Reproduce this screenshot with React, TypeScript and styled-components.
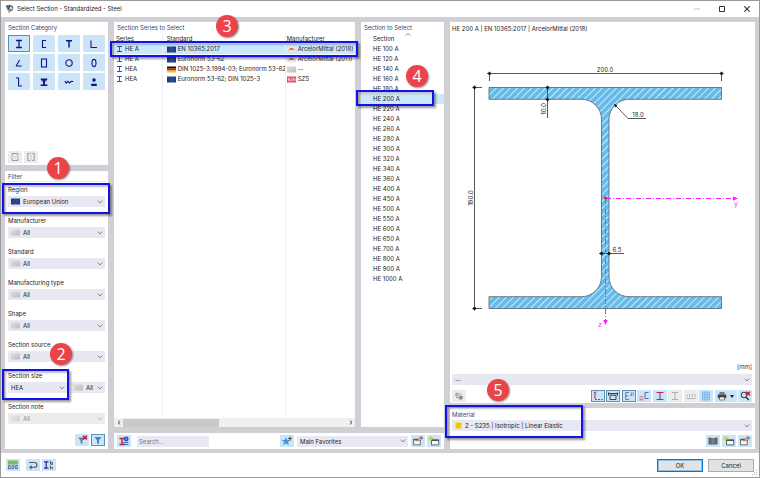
import React from "react";
import styled, { createGlobalStyle, css } from "styled-components";

const NAVY = "#14148c";
const FONT = 'Inter, "Noto Sans", sans-serif';

const GlobalStyle = createGlobalStyle`
  * { box-sizing: border-box; }
  body { margin: 0; background: #fff; }
  body, button, select, input, table { font: 6px/10px ${FONT}; color: #1c1c1c; }
  svg { display: block; flex: none; }
`;

const Window = styled.main`
  min-height: 100vh;
  display: flex;
  flex-direction: column;
  border: 1px solid #9a9a9a;
  background: #fff;
  position: relative;
`;

const TitleBar = styled.header`
  height: 16px;
  display: flex;
  align-items: center;
  padding: 0 5px 0 4px;
  gap: 3px;
`;

const Title = styled.h1`
  margin: 0;
  flex: 1;
  font: 6px/10px ${FONT};
`;

const WindowButton = styled.button`
  width: 15px;
  height: 14px;
  margin-left: 7px;
  padding: 0;
  border: 0;
  background: none;
  display: grid;
  place-items: center;
`;

const Body = styled.div`
  flex: 1;
  display: grid;
  grid-template-columns: 103px minmax(0, 330fr) minmax(0, 305fr);
  gap: 6px;
  padding: 5px 4px 4px;
  background: #cfcfd5;
`;

const Column = styled.div<{ $gap?: number }>`
  display: flex;
  flex-direction: column;
  gap: ${(p) => p.$gap ?? 6}px;
  min-width: 0;
`;

const Lists = styled.div`
  flex: 1;
  display: grid;
  grid-template-columns: minmax(0, 1fr) 83px;
  gap: 6px;
`;

const Panel = styled.section<{ $grow?: boolean; $pad?: string }>`
  position: relative;
  display: flex;
  flex-direction: column;
  background: #fff;
  padding: ${(p) => p.$pad ?? "0"};
  ${(p) => p.$grow && "flex: 1;"}
`;

const Heading = styled.h2<{ $ruled?: boolean; $inset?: boolean }>`
  margin: 0;
  height: 11px;
  font: 6px/11px ${FONT};
  color: #2f4676;
  ${(p) => p.$inset && "padding-left: 3px;"}
  ${(p) => p.$ruled && "border-bottom: 1px solid #ececf0;"}
`;

const Tiles = styled.div`
  display: grid;
  grid-template-columns: repeat(4, 1fr);
  gap: 2px 3px;
  margin-top: 2px;
`;

const Tile = styled.button<{ $on?: boolean }>`
  height: 17px;
  padding: 0;
  display: grid;
  place-items: center;
  border: 1px solid ${(p) => (p.$on ? "#4f93bd" : "#cce4f7")};
  background: #cce4f7;
`;

const IconButton = styled.button<{ $on?: boolean; $off?: boolean; $wide?: boolean }>`
  width: ${(p) => (p.$wide ? "22px" : "14px")};
  height: 12px;
  flex: none;
  padding: 0;
  display: flex;
  align-items: center;
  justify-content: center;
  gap: 3px;
  background: #cce4f7;
  border: 1px solid #cce4f7;
  ${(p) => p.$on && css`border-color: #5b91b5;`}
  ${(p) => p.$off && css`background: #ececec; border-color: #ececec;`}
`;

const Row = styled.div<{ $end?: boolean }>`
  display: flex;
  align-items: center;
  gap: 2px;
  ${(p) => p.$end && "justify-content: flex-end; margin-top: auto;"}
`;

const CategoryFooter = styled.div`
  display: flex;
  gap: 2px;
  padding-top: 61px;
`;

const FieldStack = styled.div`
  padding-top: 2px;
`;

const Field = styled.label`
  display: block;
  margin-bottom: 8px;
`;

const Caption = styled.span`
  display: block;
  height: 12px;
  line-height: 12px;
`;

const Combo = styled.span<{ $off?: boolean; $grow?: boolean }>`
  display: flex;
  align-items: center;
  gap: 3px;
  height: 11px;
  min-width: 0;
  padding: 0 2px 0 3px;
  background: #e8e8f3;
  ${(p) => p.$grow && "flex: 1;"}
  select {
    appearance: none;
    flex: 1;
    min-width: 0;
    height: 11px;
    padding: 0;
    border: 0;
    background: none;
    line-height: 11px;
    opacity: 1;
  }
  ${(p) => p.$off && css`
    background: #ececec;
    select { color: #8b8b8b; }
    svg { opacity: 0.5; }
  `}
`;

const SizeRow = styled.div`
  display: grid;
  grid-template-columns: 59px minmax(0, 1fr);
  gap: 4px;
  align-items: end;
  margin-bottom: 8px;
  ${Field} { margin-bottom: 0; }
`;

const TableBox = styled.div`
  flex: 1;
  display: flex;
`;

const Table = styled.table`
  width: 100%;
  flex: 1;
  height: 100%;
  border-collapse: collapse;
  table-layout: fixed;
  th, td { padding: 0 0 0 2px; font-weight: 400; text-align: left; white-space: nowrap; overflow: hidden; line-height: 10px; }
  th + th, td + td { border-left: 1px solid #eeeef2; padding-left: 4px; }
  th:last-child:not(:first-child), td:last-child:not(:first-child) { padding-left: 1px; }
`;

const Col = styled.col<{ $width?: string }>`
  width: ${(p) => p.$width ?? "auto"};
`;

const SectionTable = styled(Table)`
  && th, && td { padding-left: 12px; position: relative; }
`;

const DataRow = styled.tr<{ $on?: boolean }>`
  height: 10px;
  background: ${(p) => (p.$on ? "#cce8ff" : "none")};
`;

const HeadRow = styled.tr`
  height: 11px;
`;

const Cell = styled.span`
  display: flex;
  align-items: center;
  gap: 2px;
  height: 10px;
`;

const SortMark = styled.svg`
  position: absolute;
  top: 0;
  left: 44px;
`;

const ScrollBar = styled.div`
  display: flex;
  align-items: center;
  height: 9px;
  background: #f0f0f0;
`;

const ScrollArrow = styled.button`
  width: 9px;
  height: 9px;
  padding: 0;
  border: 0;
  background: none;
  display: grid;
  place-items: center;
`;

const ScrollTrack = styled.div`
  flex: 1;
  height: 8px;
`;

const ScrollThumb = styled.div`
  width: 43%;
  height: 8px;
  background: #c9c9c9;
`;

const SearchBox = styled.input`
  width: 72px;
  height: 11px;
  margin-left: 4px;
  padding: 0 2px;
  border: 0;
  border-radius: 0;
  background: #e8e8f3;
  &::placeholder { color: #777; opacity: 1; }
`;

const FavoritesBox = styled.div`
  display: flex;
  width: 111px;
  margin: 0 1px;
`;

const Spacer = styled.span`
  flex: 1;
`;

const DrawingBox = styled.div`
  flex: 1;
  display: flex;
  margin: 0 -3px 0 -2px;
`;

const Drawing = styled.svg`
  flex: 1;
  width: 100%;
  min-height: 0;
  text { font: 6px ${FONT}; fill: #222; text-anchor: middle; }
  .axis { fill: #ff1cff; font-size: 7px; }
`;

const SectionTitle = styled.p`
  margin: 0;
  height: 11px;
  line-height: 11px;
`;

const Units = styled.span`
  display: block;
  text-align: right;
  height: 12px;
  color: #33304a;
`;

const ToolRow = styled.div`
  display: flex;
  padding-top: 5px;
`;

const ViewTools = styled.div`
  margin-left: auto;
  width: 161px;
  display: flex;
  justify-content: space-between;
`;

const MaterialTools = styled.div`
  display: flex;
  justify-content: flex-end;
  gap: 2px;
  padding-top: 4px;
`;

const Footer = styled.footer`
  height: 24px;
  display: flex;
  align-items: center;
  gap: 2px;
  padding: 0 5px;
`;

const FooterGap = styled.span`
  width: 2px;
`;

const DialogButton = styled.button<{ $main?: boolean }>`
  width: 46px;
  height: 13px;
  margin-left: 3px;
  padding: 0;
  line-height: 9px;
  background: #e3e3e3;
  border: 1px solid ${(p) => (p.$main ? "#0078d7" : "#adadad")};
  ${(p) => p.$main && "box-shadow: inset 0 0 0 1px #8cc1ec;"}
`;

const Grip = styled.svg`
  position: absolute;
  right: 1px;
  bottom: 1px;
`;

const Outline = styled.span<{ $x: number; $y: number; $w: string; $h: number }>`
  position: absolute;
  z-index: 2;
  left: ${(p) => p.$x}px;
  top: ${(p) => p.$y}px;
  width: ${(p) => p.$w};
  height: ${(p) => p.$h}px;
  border: 2px solid #1212ee;
  box-shadow: 2px 2px 2px rgba(0, 0, 0, 0.4), inset 2px 2px 2px rgba(0, 0, 0, 0.25);
  pointer-events: none;
`;

const Badge = styled.span<{ $x: number; $y: number }>`
  position: absolute;
  z-index: 3;
  left: ${(p) => p.$x}px;
  top: ${(p) => p.$y}px;
  width: 22px;
  height: 22px;
  border-radius: 50%;
  background: #ea4449;
  color: #fff;
  font: 16px/22px "Open Sans", sans-serif;
  text-align: center;
  box-shadow: 1px 1px 2px rgba(0, 0, 0, 0.45);
  pointer-events: none;
`;

const Chevron = () => (
  <svg width="6" height="4" viewBox="0 0 6 4">
    <path d="M.7.6 3 2.9 5.3.6" fill="none" stroke="#666" strokeWidth=".8" />
  </svg>
);

const Swatch = () => (
  <svg width="9" height="7" viewBox="0 0 9 7">
    <defs>
      <linearGradient id="sw" x2="1" y2="1">
        <stop offset="0" stopColor="#dededb" />
        <stop offset="1" stopColor="#bdbdbd" />
      </linearGradient>
    </defs>
    <rect y=".5" width="9" height="6" fill="url(#sw)" />
  </svg>
);

const EuFlag = () => (
  <svg width="9" height="7" viewBox="0 0 9 7">
    <rect y=".5" width="9" height="6" fill="#1d3a94" />
    <circle cx="4.5" cy="3.5" r="1.8" fill="none" stroke="#8d9158" strokeWidth=".7" strokeDasharray=".6 .5" />
  </svg>
);

const DeFlag = () => (
  <svg width="9" height="7" viewBox="0 0 9 7">
    <path d="M0 .5h9v2H0z" fill="#111" />
    <path d="M0 2.5h9v2H0z" fill="#d91414" />
    <path d="M0 4.5h9v2H0z" fill="#f6c500" />
  </svg>
);

const MillLogo = () => (
  <svg width="9" height="7" viewBox="0 0 9 7">
    <path d="M0 .5h9v6H0z" fill="#e9e6e4" />
    <path d="M.4 4.8 3.6 1.9h1.8l3.2 2.9-2.8-1.4-1.3.9-1.3-.9z" fill="#d8652f" />
  </svg>
);

const SzsLogo = () => (
  <svg width="9" height="7" viewBox="0 0 9 7">
    <path d="M0 .5h9v6H0z" fill="#e2415c" />
    <path d="M3 2.2H1v1.3h2v1.3H1M3.8 2.2h1.7L3.8 4.8h1.7M8.2 2.2H6.4v1.3h1.8v1.3H6.4" fill="none" stroke="#fff" strokeWidth=".6" />
  </svg>
);

const BeamIcon = () => (
  <svg width="7" height="8" viewBox="0 0 7 8">
    <path d="M1 1.5h5M1 6.5h5M3.5 1.5v5" fill="none" stroke="#2d3c9c" strokeWidth=".9" />
  </svg>
);

const shapes: React.ReactNode[] = [
  <path d="M3 2.5h6M3 9.5h6M6 2.5v7" strokeWidth="1.3" />,
  <path d="M8 2.5H4.5v7H8" />,
  <path d="M3 2.8h6M6 2.5v7" strokeWidth="1.5" />,
  <path d="M3 2.5v7h6" />,
  <path d="M6.6 3 3.4 8.4q-.3.6.4.6H8.8" />,
  <rect x="3.5" y="2" width="5" height="8" />,
  <circle cx="6" cy="6" r="3.2" />,
  <ellipse cx="6" cy="6" rx="2" ry="3.6" />,
  <path d="M3 2h2.6v8H9" />,
  <g><path d="M2.8 3.2h6.4M2.6 9.2h6.8" strokeWidth="1.4" /><path d="M3.4 4.8h5.2" /><path d="M6 3v6" strokeWidth="2" /></g>,
  <path d="M1.8 5 3.2 7l1.7-1.6L6.6 7l1.7-1.6 2 .1" strokeWidth="1.2" />,
  <g fill={NAVY}><circle cx="6" cy="4" r="1.2" /><path d="M3.8 8.2h4.4v1.2H3.8z" /></g>,
];
const shapeNames = ["I-section", "Channel", "T-section", "Angle", "Acute angle", "Rectangular tube", "Pipe", "Oval", "Z-section", "Rail", "Corrugated", "Other"];

const Icon = ({ children, w = 12 }: { children: React.ReactNode; w?: number }) => (
  <svg width={w} height="10" viewBox={`0 0 ${w} 10`} fill="none">{children}</svg>
);

const NewIcon = () => (
  <Icon>
    <path d="M3.5 3.9h7.2v5H3.5z" fill="#f7fbff" stroke="#444" strokeWidth=".8" />
    <path d="M3.5 4.3h7.2" stroke="#444" strokeWidth="1.2" />
    <path d="M3 .4l.7 1.5L5.3 2.5 3.7 3.2 3 4.9 2.2 3.2.6 2.5 2.2 1.9z" fill="#dfdf12" stroke="#8d9a20" strokeWidth=".3" />
  </Icon>
);

const EditIcon = () => (
  <Icon>
    <path d="M1.5 3.2h6.8v5.6H1.5z" fill="#f4f4f4" stroke="#555" strokeWidth=".8" />
    <path d="M1.5 3.8h6.8" stroke="#444" strokeWidth="1.2" />
    <path d="M4.6 5.2 6 2.6 8.8.8l1.3 1.5-2 2.6-1.6-.6z" fill="#d9a584" stroke="#7d5a48" strokeWidth=".4" />
    <path d="m9 .3 2 1.6-.6 1.3-2-1.9z" fill="#3561a8" />
  </Icon>
);

const BookIcon = () => (
  <Icon>
    <path d="M1.5 1.5 5.7 2v6.8l-4.2-.6zM10.5 1.5 6.3 2v6.8l4.2-.6z" fill="#555" />
    <path d="M3 2.2v5.6M4.4 2.4v5.6M7.6 2.4v5.6M9 2.2v5.6" stroke="#a7b4bd" strokeWidth=".4" />
  </Icon>
);

const RedX = () => <path d="m7 .8 4 3.6m0-3.6L7 4.4" stroke="#d0121b" strokeWidth="1.5" />;

type ComboBoxProps = { label: string; value: string; icon?: React.ReactNode; off?: boolean; grow?: boolean };
const ComboBox = ({ label, value, icon, off, grow }: ComboBoxProps) => (
  <Combo $off={off} $grow={grow}>
    {icon}
    <select aria-label={label} disabled={off}>
      <option>{value}</option>
    </select>
    <Chevron />
  </Combo>
);

const filters = ["Manufacturer", "Standard", "Manufacturing type", "Shape", "Section source"];

const series = [
  ["HE A", <EuFlag />, "EN 10365:2017", <MillLogo />, "ArcelorMittal (2018)"],
  ["HE A", <EuFlag />, "Euronorm 53-62", <MillLogo />, "ArcelorMittal (2011)"],
  ["HEA", <DeFlag />, "DIN 1025-3:1994-03; Euronorm 53-62", <Swatch />, "--"],
  ["HEA", <EuFlag />, "Euronorm 53-62; DIN 1025-3", <SzsLogo />, "SZS"],
];

const sizes = [100, 120, 140, 160, 180, 200, 220, 240, 260, 280, 300, 320, 340, 360, 400, 450, 500, 550, 600, 650, 700, 800, 900, 1000];

const BEAM =
  "M489 86.5H721.5V98.3H629A20 20 0 0 0 609 118.3V275.7A20 20 0 0 0 629 295.7H721.5V307.5H489V295.7H581.5A20 20 0 0 0 601.5 275.7V118.3A20 20 0 0 0 581.5 98.3H489Z";

const Knot = ({ x, y }: { x: number; y: number }) => (
  <path d={`M${x - 2} ${y}l2-2 2 2-2 2z`} fill="#111" />
);

const SectionDrawing = () => (
  <Drawing viewBox="450 34 305 326" role="img" aria-label="HE 200 A cross-section">
    <defs>
      <pattern id="hatch" width="5" height="5" patternUnits="userSpaceOnUse" patternTransform="rotate(45)">
        <path d="M0 0h5v5H0z" fill="#67bbea" />
        <path d="M2.5 0v5" stroke="#cdeafa" strokeWidth="1" />
      </pattern>
    </defs>
    <path d={BEAM} fill="url(#hatch)" stroke="#5c6f7c" strokeWidth=".9" />
    <g stroke="#444" strokeWidth=".9" fill="none">
      <path d="M487 72.5H723.5M489.5 71v9M721.5 71v9" />
      <path d="M474.5 84.5V309.5M472.5 86.5H482M472.5 307.5H482" />
      <path d="M547.5 85V117M615.5 104.5 628 117.5H646M599 252.5H624" />
    </g>
    <Knot x={489.5} y={72.5} />
    <Knot x={721.5} y={72.5} />
    <Knot x={474.5} y={86.5} />
    <Knot x={474.5} y={307.5} />
    <Knot x={547.5} y={86.5} />
    <Knot x={547.5} y={98.5} />
    <Knot x={601.5} y={252.5} />
    <Knot x={609} y={252.5} />
    <path d="m614 103 3.6 1-2.6 2.4z" fill="#111" />
    <path d="M606 197.5H733" stroke="#ff1cff" strokeWidth="1" strokeDasharray="5 2 1 2" />
    <path d="M605.5 198V319" stroke="#ff1cff" strokeWidth="1" strokeDasharray="5 2 1 2" />
    <path d="M733 195.3v4.4l5-2.2zM603.2 319h4.6l-2.3 5z" fill="#ff1cff" />
    <circle cx="605.5" cy="197" r="1.5" fill="#ee1c25" />
    <text x="605" y="71">200.0</text>
    <text x="638" y="116">18.0</text>
    <text x="617" y="251">6.5</text>
    <text transform="translate(473 197) rotate(-90)">190.0</text>
    <text transform="translate(546 108) rotate(-90)">10.0</text>
    <text x="736" y="205" className="axis">y</text>
    <text x="600" y="326" className="axis">z</text>
  </Drawing>
);

const CategoryPanel = () => (
  <Panel $pad="0 3px 2px">
    <Heading>Section Category</Heading>
    <Tiles>
      {shapes.map((shape, i) => (
        <Tile key={i} $on={i === 0} aria-label={shapeNames[i]}>
          <svg width="12" height="12" fill="none" stroke={NAVY} strokeWidth="1.1">{shape}</svg>
        </Tile>
      ))}
    </Tiles>
    <CategoryFooter>
      <IconButton $off aria-label="Horizontal pair">
        <Icon><path d="M3.2 4V1.5h5.6V4M3.2 6v2.5h5.6V6" stroke="#888" strokeWidth=".8" /><path d="M1.5 5h9" stroke="#aaa" strokeWidth=".7" strokeDasharray="1.5 .8" /></Icon>
      </IconButton>
      <IconButton $off aria-label="Vertical pair">
        <Icon><path d="M4.8 1.5H2.8v7h2M7.2 1.5h2v7h-2" stroke="#888" strokeWidth=".8" /><path d="M6 .5v9" stroke="#aaa" strokeWidth=".7" strokeDasharray="1.5 .8" /></Icon>
      </IconButton>
    </CategoryFooter>
    <Badge $x={42} $y={135}>1</Badge>
  </Panel>
);

const FilterPanel = () => (
  <Panel $grow $pad="0 3px 3px">
    <Heading $ruled>Filter</Heading>
    <FieldStack>
      <Field>
        <Caption>Region</Caption>
        <ComboBox label="Region" value="European Union" icon={<EuFlag />} />
      </Field>
      {filters.map((f) => (
        <Field key={f}>
          <Caption>{f}</Caption>
          <ComboBox label={f} value="All" icon={<Swatch />} />
        </Field>
      ))}
      <SizeRow>
        <Field>
          <Caption>Section size</Caption>
          <ComboBox label="Section size" value="HEA" />
        </Field>
        <ComboBox label="Section size variant" value="All" icon={<Swatch />} />
      </SizeRow>
      <Field>
        <Caption>Section note</Caption>
        <ComboBox label="Section note" value="All" icon={<Swatch />} off />
      </Field>
    </FieldStack>
    <Row $end>
      <IconButton aria-label="Clear filter">
        <Icon><path d="M2 2.5h7L6.5 5.4V9l-2-1V5.4z" fill="#5e87b8" /><RedX /></Icon>
      </IconButton>
      <IconButton $on aria-label="Filter">
        <Icon><path d="M2.5 2h7L7 5.2V9L5 8V5.2z" fill="#4b80bd" /></Icon>
      </IconButton>
    </Row>
    <Outline $x={-3} $y={12} $w="108px" $h={31} />
    <Outline $x={-3} $y={198} $w="67px" $h={31} />
    <Badge $x={45} $y={172}>2</Badge>
  </Panel>
);

const SeriesPanel = () => (
  <Panel>
    <Heading $inset>Section Series to Select</Heading>
    <TableBox>
      <Table>
        <colgroup>
          <Col $width="20%" />
          <Col />
          <Col $width="29%" />
        </colgroup>
        <thead>
          <HeadRow><th>Series</th><th>Standard</th><th>Manufacturer</th></HeadRow>
        </thead>
        <tbody>
          {series.map((r, i) => (
            <DataRow key={i} $on={i === 0}>
              <td><Cell><BeamIcon />{r[0]}</Cell></td>
              <td><Cell>{r[1]}{r[2]}</Cell></td>
              <td><Cell>{r[3]}{r[4]}</Cell></td>
            </DataRow>
          ))}
          <tr><td /><td /><td /></tr>
        </tbody>
      </Table>
    </TableBox>
    <ScrollBar>
      <ScrollArrow aria-label="Scroll left">
        <svg width="4" height="5"><path d="M3.2.5 1 2.5l2.2 2" fill="none" stroke="#444" /></svg>
      </ScrollArrow>
      <ScrollTrack><ScrollThumb /></ScrollTrack>
      <ScrollArrow aria-label="Scroll right">
        <svg width="4" height="5"><path d="M.8.5 3 2.5l-2.2 2" fill="none" stroke="#444" /></svg>
      </ScrollArrow>
    </ScrollBar>
    <Outline $x={-4} $y={19} $w="calc(100% + 7px)" $h={16} />
    <Badge $x={102} $y={-7}>3</Badge>
  </Panel>
);

const SizesPanel = () => (
  <Panel>
    <Heading $inset>Section to Select</Heading>
    <TableBox>
      <SectionTable>
        <thead>
          <HeadRow>
            <th>
              Section
              <SortMark width="6" height="3"><path d="M.5 2.6 3 .5l2.5 2.1" fill="none" stroke="#777" strokeWidth=".8" /></SortMark>
            </th>
          </HeadRow>
        </thead>
        <tbody>
          {sizes.map((s) => (
            <DataRow key={s} $on={s === 200}><td>HE {s} A</td></DataRow>
          ))}
          <tr><td /></tr>
        </tbody>
      </SectionTable>
    </TableBox>
    <Outline $x={-5} $y={68} $w="78px" $h={16} />
    <Badge $x={45} $y={43}>4</Badge>
  </Panel>
);

const SearchPanel = () => (
  <Panel $pad="2px 3px">
    <Row>
      <IconButton aria-label="Section info">
        <Icon>
          <path d="M1.5 2.5h5M1.5 8.5h5M4 2.5v6" stroke="#d0232b" strokeWidth="1.5" />
          <path d="M5 6.5h5.5M5 8.5h5.5" stroke="#2b4b9b" strokeWidth=".8" />
          <circle cx="8.2" cy="3" r="2.4" fill="#1845d2" />
          <path d="M8.2 1.6v2.8" stroke="#fff" strokeWidth=".7" />
        </Icon>
      </IconButton>
      <SearchBox aria-label="Search" placeholder="Search..." />
      <Spacer />
      <IconButton aria-label="Add to favorites">
        <Icon>
          <path d="m5 1.3 1.2 2.6 3 .2-2.2 2 .8 3L5 7.5 2.2 9.1l.8-3-2.2-2 3-.2z" fill="#3f97e8" />
          <path d="M9 .5v4M7 2.5h4" stroke="#5b5b2c" strokeWidth="1.2" />
        </Icon>
      </IconButton>
      <FavoritesBox><ComboBox grow label="Favorites" value="Main Favorites" /></FavoritesBox>
      <IconButton aria-label="Edit favorites"><EditIcon /></IconButton>
      <IconButton aria-label="New favorites"><NewIcon /></IconButton>
    </Row>
  </Panel>
);

const PreviewPanel = () => (
  <Panel $grow $pad="1px 3px 1px 2px">
    <SectionTitle>HE 200 A | EN 10365:2017 | ArcelorMittal (2018)</SectionTitle>
    <DrawingBox><SectionDrawing /></DrawingBox>
    <Units>[mm]</Units>
    <ComboBox label="Drawing note" value="--" />
    <ToolRow>
      <IconButton $off aria-label="Colours">
        <Icon><circle cx="4" cy="3.5" r="2" fill="#aaa" /><circle cx="7.8" cy="6.6" r="2.2" fill="#909090" /><path d="M3 6.5h2.5M6.5 3h2" stroke="#999" /></Icon>
      </IconButton>
      <ViewTools>
        <IconButton $on aria-label="Stress points">
          <Icon><path d="M3 1v6.8" stroke="#cc2850" strokeWidth="1.1" /><path d="M3 8.5h7.5" stroke="#cc2850" strokeWidth="1.2" strokeDasharray="2 1" /><path d="M2 1.3h2.2" stroke="#cc2850" /></Icon>
        </IconButton>
        <IconButton $on aria-label="Dimensions">
          <Icon><path d="M1.5 1.5v3M10.5 1.5v3M1.5 2.6h9" stroke="#222" strokeWidth=".9" /><path d="M3 4.2h6v4.3H3z" stroke="#333" strokeWidth=".9" /></Icon>
        </IconButton>
        <IconButton $on aria-label="Labels">
          <Icon><path d="M6 1.5H2.7v7H6M2.7 5h2.6" stroke="#5a6fa8" strokeWidth=".9" /><path d="M7 4.5h1.4v-3M10.2 1.2v3.3" stroke="#cc3b64" strokeWidth=".8" /></Icon>
        </IconButton>
        <IconButton aria-label="Principal axes">
          <Icon><path d="M10.5 1.5H7v6h3.5" stroke="#466b9d" strokeWidth=".9" /><path d="M2.2 5.5h2.6v3H2.2zM1.6 9h3.8" stroke="#d36b8c" strokeWidth=".7" /></Icon>
        </IconButton>
        <IconButton aria-label="Beam">
          <Icon><path d="M2.5 1.5h7M2.5 8.5h7" stroke="#c92446" strokeWidth="1.2" /><path d="M6 2v6" stroke="#335566" /></Icon>
        </IconButton>
        <IconButton $off aria-label="Beam parts">
          <Icon><path d="M3 1.5h6M3 8.5h6M6 1.5v7" stroke="#b0b0b0" /></Icon>
        </IconButton>
        <IconButton $off aria-label="Dimension chain">
          <Icon><path d="M1.5 7.5h9M2 3v3M4.7 3v3M7.3 3v3M10 3v3" stroke="#b0b0b0" strokeWidth=".9" /></Icon>
        </IconButton>
        <IconButton aria-label="Grid">
          <Icon><path d="M2.5 1h7v8h-7zM4.8 1v8M7.2 1v8M2.5 3.7h7M2.5 6.3h7" stroke="#50a5e5" strokeWidth=".7" /></Icon>
        </IconButton>
        <IconButton $wide aria-label="Print">
          <Icon w={10}><path d="M2.5 1h5v2h-5z" fill="#777" /><path d="M.8 3.4h8.4v3.8H.8z" fill="#3d4248" /><path d="M2.5 6h5v3h-5z" fill="#eee" stroke="#444" strokeWidth=".6" /></Icon>
          <svg width="4" height="3"><path d="M0 0h4L2 3z" fill="#222" /></svg>
        </IconButton>
        <IconButton aria-label="Reset view">
          <Icon><circle cx="5" cy="4" r="2.7" stroke="#3c5068" strokeWidth="1.1" /><path d="m6.8 6 3 3" stroke="#2d3540" strokeWidth="1.5" /><RedX /></Icon>
        </IconButton>
      </ViewTools>
    </ToolRow>
  </Panel>
);

const MaterialPanel = () => (
  <Panel $pad="1px 3px 2px 2px">
    <Heading>Material</Heading>
    <ComboBox
      label="Material"
      value="2 - S235 | Isotropic | Linear Elastic"
      icon={<svg width="7" height="7"><path d="M.5.5h6v6h-6z" fill="#f6c30e" /></svg>}
    />
    <MaterialTools>
      <IconButton aria-label="Material library"><BookIcon /></IconButton>
      <IconButton aria-label="New material"><NewIcon /></IconButton>
      <IconButton aria-label="Edit material"><EditIcon /></IconButton>
    </MaterialTools>
    <Outline $x={-5} $y={-3} $w="138px" $h={33} />
    <Badge $x={37} $y={-29}>5</Badge>
  </Panel>
);

export default function App() {
  return (
    <Window>
      <GlobalStyle />
      <TitleBar>
        <svg width="9" height="10" viewBox="0 0 9 10">
          <path d="M.5 2 5 .6l3.4 1.6-.8 4L4 8.8z" fill="#718ba5" />
          <path d="M1 2.4 3 1.8l.6 4.6M4.4 1.6l.8 4.8" stroke="#263d5c" strokeWidth=".8" fill="none" />
          <circle cx="6" cy="4.2" r="1.7" fill="#e9eef3" stroke="#36506f" strokeWidth=".7" />
          <path d="m2.6 6.2 1.6-1 .8 2.6-1 1.4z" fill="#e2a936" />
        </svg>
        <Title>Select Section - Standardized - Steel</Title>
        <WindowButton aria-label="Minimize">
          <svg width="6" height="6"><path d="M0 3h6" stroke="#c6c6c6" /></svg>
        </WindowButton>
        <WindowButton aria-label="Maximize">
          <svg width="6" height="6"><path d="M.5.5h5v5h-5z" fill="none" stroke="#333" /></svg>
        </WindowButton>
        <WindowButton aria-label="Close">
          <svg width="6" height="6"><path d="m.3.3 5.4 5.4m0-5.4L.3 5.7" stroke="#333" strokeWidth="1.1" /></svg>
        </WindowButton>
      </TitleBar>

      <Body>
        <Column>
          <CategoryPanel />
          <FilterPanel />
        </Column>
        <Column>
          <Lists>
            <SeriesPanel />
            <SizesPanel />
          </Lists>
          <SearchPanel />
        </Column>
        <Column $gap={5}>
          <PreviewPanel />
          <MaterialPanel />
        </Column>
      </Body>

      <Footer>
        <IconButton aria-label="Units and decimal places">
          <Icon><path d="M1 .5h10v4H1z" fill="#82ba63" /><path d="M1.5 5.5h1.7v3.2H1.5zM5.2 5.5h1.7v3.2H5.2zM8.6 5.5h1.7v3.2H8.6zM3.9 8.2v1" stroke="#254a78" strokeWidth=".7" /></Icon>
        </IconButton>
        <FooterGap />
        <IconButton aria-label="Back">
          <Icon><path d="M2 2.5h5.5a2.3 2.3 0 0 1 0 4.8H3" stroke="#4d5861" strokeWidth="1.1" /><path d="M4.6 5 2 7.3l2.6 2.2z" fill="#4d5861" /></Icon>
        </IconButton>
        <IconButton aria-label="Section parameters">
          <Icon><path d="M1 1.8h4.5M1 8.2h4.5M3.2 1.8v6.4" stroke="#27279c" strokeWidth="1.2" /><path d="M7.5.8v3.5M7.5 2.6h2v1.7h-2M7.5 5.8v3.5M7.5 7.4h2v1.9" stroke="#3c444d" strokeWidth=".8" /></Icon>
        </IconButton>
        <Spacer />
        <DialogButton $main>OK</DialogButton>
        <DialogButton>Cancel</DialogButton>
      </Footer>
      <Grip width="6" height="6" fill="#bbb"><path d="M4 0h1v1H4zM2 2h1v1H2zM4 2h1v1H4zM0 4h1v1H0zM2 4h1v1H2zM4 4h1v1H4z" /></Grip>
    </Window>
  );
}
